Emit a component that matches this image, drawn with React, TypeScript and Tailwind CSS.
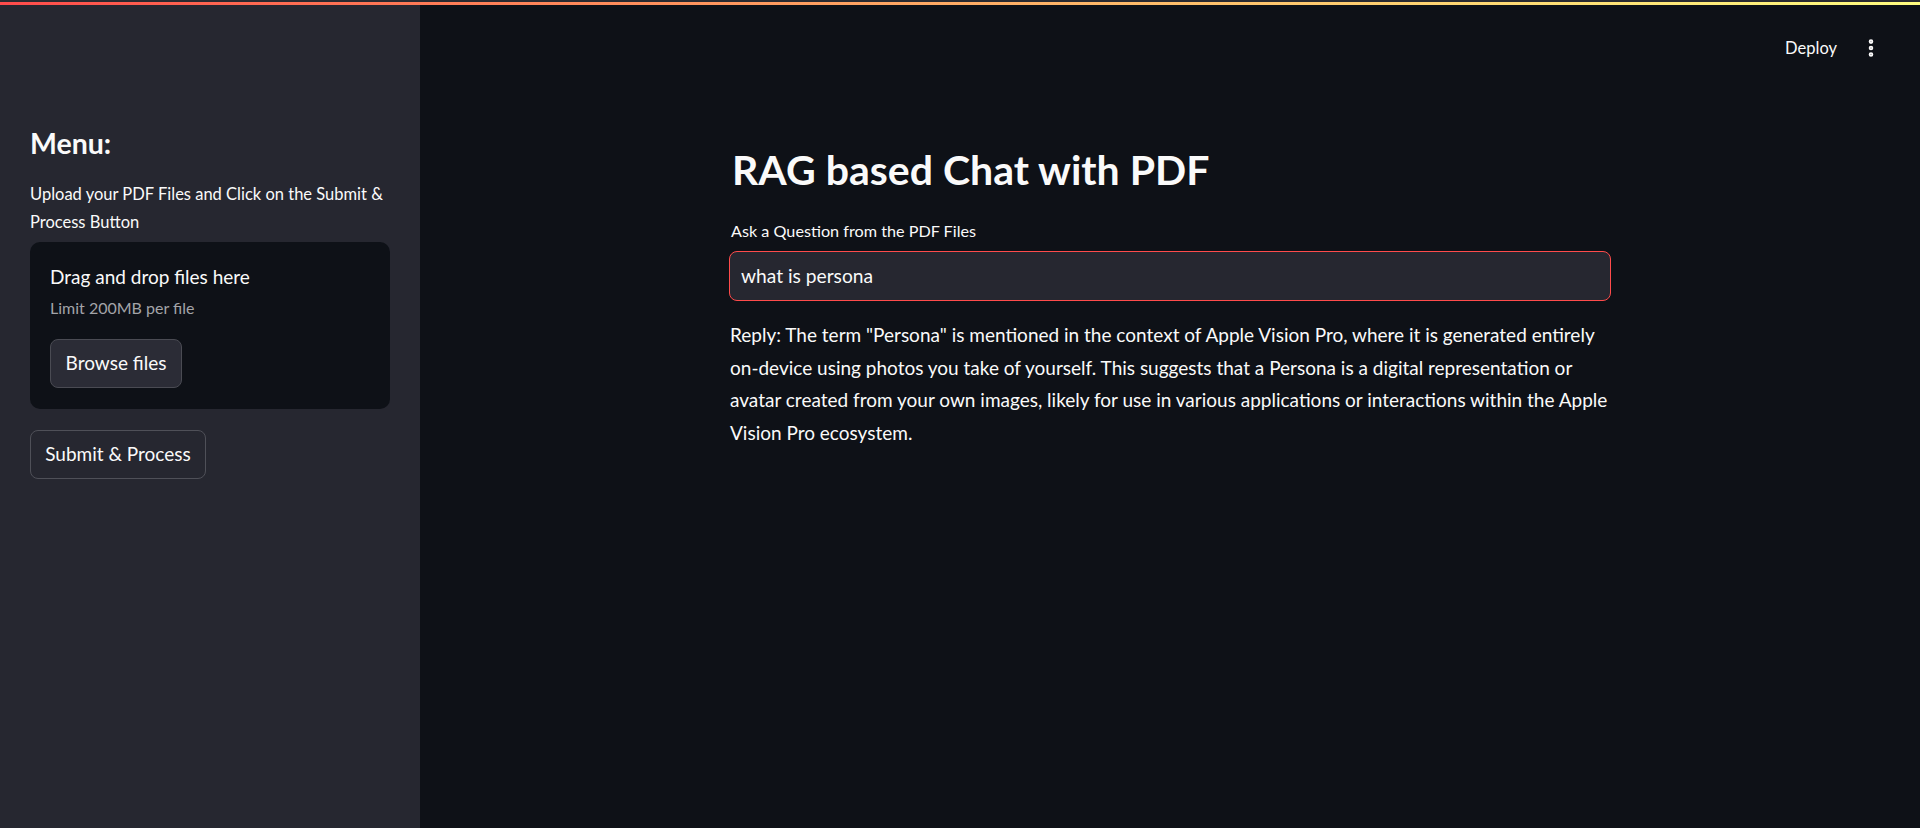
import { EllipsisVertical } from "lucide-react";

const font = { fontFamily: "Lato, 'Noto Sans', sans-serif" };

function Sidebar() {
  return (
    <aside className="w-[420px] shrink-0 bg-[#262730] pl-[30px] pr-[30px] pt-[118px]">
      <h3 className="text-[28.5px] leading-[40px] font-bold text-[#fafafa]">Menu:</h3>
      <p className="mt-[17px] text-[16.5px] leading-[28px] text-[#fafafa]">
        Upload your PDF Files and Click on the Submit &amp; Process Button
      </p>

      {/* File uploader */}
      <div className="mt-[6px] h-[167px] rounded-[10px] bg-[#0e1117] px-[20px] pt-[21px]">
        <div className="text-[19px] leading-[28px] text-[#fafafa]">Drag and drop files here</div>
        <div className="mt-[5px] text-[16px] leading-[24px] text-[#a3a4a8]">Limit 200MB per file</div>
        <button className="mt-[19px] h-[49px] w-[132px] rounded-[8px] border border-[#4a4b53] bg-[#2b2c36] text-[19px] text-[#fafafa]">
          Browse files
        </button>
      </div>

      <button className="mt-[21px] h-[49px] w-[176px] rounded-[8px] border border-[#4f5058] bg-[#262730] text-[19px] text-[#fafafa]">
        Submit &amp; Process
      </button>
    </aside>
  );
}

export default function App() {
  return (
    <div className="flex h-[828px] flex-col overflow-hidden bg-[#0e1117]" style={font}>
      {/* top decoration */}
      <div className="h-[2px] shrink-0 bg-[#2a2b31]" />
      <div className="h-[3px] shrink-0 bg-gradient-to-r from-[#ff4b4b] to-[#fffd80]" />

      <div className="flex flex-1">
        <Sidebar />

        <main className="flex flex-1 flex-col">
          {/* header */}
          <div className="flex h-[86px] items-center justify-end pr-[38px]">
            <span className="text-[16.5px] text-[#fafafa]">Deploy</span>
            <EllipsisVertical className="ml-[23px] h-[22px] w-[22px] text-[#fafafa]" strokeWidth={3} />
          </div>

          <div className="mx-auto w-[882px] pt-[49px]">
            <h1 className="pl-[3px] text-[41px] leading-[60px] font-bold text-[#fafafa]">RAG based Chat with PDF</h1>

            <label className="mt-[19px] block pl-[2px] text-[16.2px] leading-[24px] text-[#fafafa]">
              Ask a Question from the PDF Files
            </label>
            <div className="mt-[8px] flex h-[50px] items-center rounded-[8px] border border-[#ff4b4b] bg-[#262730] px-[11px]">
              <span className="text-[19.2px] text-[#fafafa]">what is persona</span>
            </div>

            <p className="mt-[18px] pl-[1px] text-[19px] leading-[32.5px] text-[#fafafa]">
              Reply: The term "Persona" is mentioned in the context of Apple Vision Pro, where it is generated entirely
              on-device using photos you take of yourself. This suggests that a Persona is a digital representation or
              avatar created from your own images, likely for use in various applications or interactions within the Apple
              Vision Pro ecosystem.
            </p>
          </div>
        </main>
      </div>
    </div>
  );
}
